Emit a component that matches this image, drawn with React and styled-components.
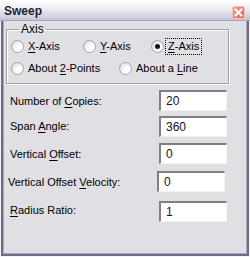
import React from "react";
import styled, { createGlobalStyle } from "styled-components";

const Global = createGlobalStyle`
  html, body { margin: 0; padding: 0; background: #ffffff; }
  body { font-family: "Liberation Sans", Arial, sans-serif; font-size: 11px; color: #000; }
`;

const Window = styled.div`
  width: 250px;
  height: 257px;
  display: flex;
  flex-direction: column;
  box-sizing: border-box;
  overflow: hidden;
`;

const TitleBar = styled.div`
  height: 21px;
  flex: none;
  display: flex;
  align-items: center;
  padding: 0 6px 0 4px;
  box-sizing: border-box;
  background: linear-gradient(to bottom, #ffffff 0%, #f1f1f6 35%, #d8d8e4 75%, #c4c4d4 100%);
  border-bottom: 1px solid #a6a6bc;
`;

const Title = styled.span`
  flex: 1;
  font-weight: bold;
  font-size: 12px;
  color: #1e1e2c;
  padding-top: 2px;
`;

const CloseButton = styled.div`
  width: 13px;
  height: 13px;
  box-sizing: border-box;
  border: 1px solid #f6c2bc;
  border-radius: 2px;
  background: linear-gradient(135deg, #f49a90, #e36459);
  display: flex;
  align-items: center;
  justify-content: center;
  margin-top: 4px;
  margin-right: -1px;
`;

const FrameOuter = styled.div`
  flex: 1;
  display: flex;
  border: 1px solid #f4f4f8;
  border-top: 0;
`;

const FrameMid = styled.div`
  flex: 1;
  display: flex;
  border: 2px solid #6c6b88;
  border-top: 0;
`;

const Content = styled.div`
  flex: 1;
  background: #e0dfe3;
  border: 1px solid #a9a8c0;
  border-top: 0;
  padding: 2px 0 0 2px;
  display: flex;
  flex-direction: column;
`;

const GroupBox = styled.fieldset`
  display: block;
  margin: 0;
  width: 223px;
  height: 61px;
  box-sizing: border-box;
  padding: 0 0 0 4px;
  border: 1px solid #a2a1a8;
  box-shadow: inset 1px 1px 0 #ffffff, 1px 1px 0 #ffffff;
  flex: none;
`;

const Legend = styled.legend`
  margin-left: 8px;
  padding: 0 2px;
  height: 13px;
  line-height: 13px;
  font-size: 12px;
  color: #000;
`;

const RadioRow = styled.div`
  display: flex;
  height: 20px;
  align-items: center;
  margin-top: ${(p) => p.$mt || 0}px;
`;

const Option = styled.label`
  display: flex;
  align-items: center;
  width: ${(p) => p.$w}px;
  flex: none;
  height: 100%;
`;

const RadioCircle = styled.span`
  width: 13px;
  height: 13px;
  box-sizing: border-box;
  border-radius: 50%;
  border: 1px solid #a4a4ae;
  background: radial-gradient(circle at 70% 70%, #ffffff 30%, #ececef 60%, #d4d4da 100%);
  display: flex;
  align-items: center;
  justify-content: center;
  flex: none;
  margin-right: 4px;
  &::after {
    content: "";
    width: 5px;
    height: 5px;
    border-radius: 50%;
    background: ${(p) => (p.$checked ? "#111" : "transparent")};
  }
`;

const OptionText = styled.span`
  line-height: 14px;
  padding: 0 2px 1px 0;
  margin-left: ${(p) => (p.$focus ? "-2px" : "0")};
  padding-left: ${(p) => (p.$focus ? "2px" : "0")};
  outline: ${(p) => (p.$focus ? "1px dotted #000" : "none")};
  outline-offset: 0;
`;

const U = styled.span`
  text-decoration: underline;
  text-underline-offset: 2px;
`;

const FieldList = styled.div`
  display: flex;
  flex-direction: column;
  padding-left: 4px;
`;

const FieldRow = styled.div`
  display: grid;
  grid-template-columns: 149px 68px;
  align-items: center;
  margin-top: ${(p) => p.$mt}px;
  margin-left: ${(p) => p.$shift || 0}px;
`;

const FieldLabel = styled.span`
  padding-bottom: ${(p) => p.$lift || 0}px;
`;

const Input = styled.div`
  height: 21px;
  box-sizing: border-box;
  background: #ffffff;
  border-top: 2px solid #7f7f82;
  border-left: 2px solid #7f7f82;
  border-right: 1px solid #f2f2ee;
  border-bottom: 1px solid #f2f2ee;
  padding: 2px 0 0 5px;
  font-size: 12px;
  color: #111122;
`;

const fields = [
  { pre: "Number of ", key: "C", post: "opies:", value: "20", mt: 6, lift: 0 },
  { pre: "Span ", key: "A", post: "ngle:", value: "360", mt: 5, lift: 2 },
  { pre: "Vertical ", key: "O", post: "ffset:", value: "0", mt: 6, lift: 0 },
  { pre: "Vertical Offset ", key: "V", post: "elocity:", value: "0", mt: 7, shift: -2, lift: 0 },
  { pre: "", key: "R", post: "adius Ratio:", value: "1", mt: 9, lift: 4 },
];

export default function App() {
  return (
    <>
      <Global />
      <Window>
        <TitleBar>
          <Title>Sweep</Title>
          <CloseButton>
            <svg width="9" height="9" viewBox="0 0 9 9">
              <path d="M1.5 1.5 L7.5 7.5 M7.5 1.5 L1.5 7.5" stroke="#fff" strokeWidth="2" strokeLinecap="square" />
            </svg>
          </CloseButton>
        </TitleBar>
        <FrameOuter>
          <FrameMid>
            <Content>
              <GroupBox>
                <Legend>Axis</Legend>
                <RadioRow>
                  <Option $w={72}>
                    <RadioCircle />
                    <OptionText><U>X</U>-Axis</OptionText>
                  </Option>
                  <Option $w={68}>
                    <RadioCircle />
                    <OptionText><U>Y</U>-Axis</OptionText>
                  </Option>
                  <Option $w={60}>
                    <RadioCircle $checked />
                    <OptionText $focus><U>Z</U>-Axis</OptionText>
                  </Option>
                </RadioRow>
                <RadioRow $mt={2}>
                  <Option $w={108}>
                    <RadioCircle />
                    <OptionText>About <U>2</U>-Points</OptionText>
                  </Option>
                  <Option $w={100}>
                    <RadioCircle />
                    <OptionText>About a <U>L</U>ine</OptionText>
                  </Option>
                </RadioRow>
              </GroupBox>
              <FieldList>
                {fields.map((f) => (
                  <FieldRow key={f.key} $mt={f.mt} $shift={f.shift}>
                    <FieldLabel $lift={f.lift}>
                      {f.pre}
                      <U>{f.key}</U>
                      {f.post}
                    </FieldLabel>
                    <Input>{f.value}</Input>
                  </FieldRow>
                ))}
              </FieldList>
            </Content>
          </FrameMid>
        </FrameOuter>
      </Window>
    </>
  );
}
